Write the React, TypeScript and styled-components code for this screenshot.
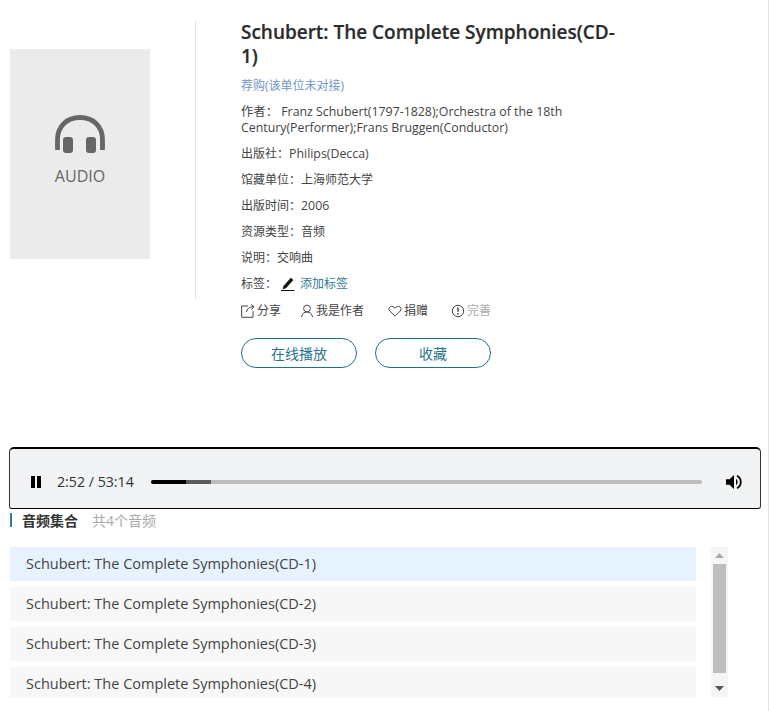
import React from "react";
import styled, { createGlobalStyle } from "styled-components";

const Global = createGlobalStyle`
  html, body { margin: 0; padding: 0; background: #fff; }
  body { font-family: "Open Sans", "Noto Sans CJK SC", sans-serif; color: #333; }
  * { box-sizing: border-box; }
`;

const Page = styled.div`
  width: 769px; height: 711px; overflow: hidden; position: relative;
  border-right: 1px solid #e4e4e4;
  padding-left: 10px;
  display: flex; flex-direction: column;
`;
const Top = styled.section`
  display: flex; height: 447px; padding-top: 20px;
`;
const CoverCol = styled.div`
  width: 186px; height: 280px; padding-top: 29px; border-right: 1px solid #e2e2e2;
`;
const Cover = styled.div`
  width: 140px; height: 210px; background: #ebebeb;
  display: flex; flex-direction: column; align-items: center; padding-top: 66px;
`;
const CoverLabel = styled.div`
  font-size: 16px; line-height: 20px; color: #666; margin-top: 13px;
`;
const Info = styled.div`
  width: 382px; margin-left: 45px; display: flex; flex-direction: column;
`;
const Title = styled.h1`
  margin: 0; font-size: 19px; line-height: 24px; font-weight: 600; color: #2b2b2b; width: 380px; letter-spacing: -0.02px; -webkit-text-stroke: 0.2px #2b2b2b;
`;
const Recommend = styled.a`
  margin-top: 9px; font-size: 12px; line-height: 18px; color: #6f97c9;
`;
const Meta = styled.div<{ $first?: boolean }>`
  font-size: ${p => (p.$first ? 12.35 : 12)}px; line-height: 16px; color: #444; margin-top: ${p => (p.$first ? 9 : 10)}px; width: 340px;
`;
const Latin = styled.span`
  font-size: 12.35px;
`;
const TagLink = styled.a`
  color: #2f7a96; margin-left: 4px;
`;
const TagRow = styled(Meta)`
  display: flex; align-items: center;
  svg { margin-left: 3px; }
`;
const Actions = styled.div`
  display: flex; margin-top: 11px; font-size: 12px; line-height: 16px; color: #444;
`;
const Action = styled.span<{ $w: number; $muted?: boolean }>`
  display: flex; align-items: center; gap: 2px; width: ${p => p.$w}px;
  color: ${p => (p.$muted ? "#aaa" : "#444")};
  svg { flex: none; }
`;
const Buttons = styled.div`
  display: flex; gap: 18px; margin-top: 19px;
`;
const Pill = styled.button`
  width: 116px; height: 30px; border: 1px solid #1f6f8b; border-radius: 15px; background: #fff;
  color: #2a7390; font: 14px "Open Sans", "Noto Sans CJK SC", sans-serif; padding: 0;
`;
const Player = styled.div`
  margin-left: -1px; width: 752px; height: 62px; flex: none;
  background: #f1f3f4; border: 1px solid #000; border-top-width: 2px; border-radius: 5px 5px 3px 3px;
  display: flex; align-items: center; padding: 6px 18px 0 21px;
  border-left-color: #333; border-right-color: #333;
`;
const Pause = styled.div`
  width: 10px; height: 12px; display: flex; justify-content: space-between; flex: none;
  &::before, &::after { content: ""; width: 4px; height: 12px; background: #000; }
`;
const Time = styled.span`
  margin-left: 16px; width: 94px; flex: none; font-size: 14.2px; color: #333;
`;
const Track = styled.div`
  flex: 1; height: 4px; border-radius: 2px; background: #bdbdbd; display: flex; overflow: hidden;
`;
const Played = styled.div`
  width: 35px; background: #000;
`;
const Buffered = styled.div`
  width: 25px; background: #5c5c5c;
`;
const Volume = styled.svg`
  margin-left: 24px; flex: none;
`;
const SectionHead = styled.div`
  display: flex; align-items: center; height: 14px; margin-top: 4px; flex: none;
  border-left: 2px solid #2f78a8; padding-left: 10px; font-size: 14px;
`;
const SectionTitle = styled.strong`
  font-weight: 700; color: #333;
`;
const SectionCount = styled.span`
  margin-left: 14px; color: #aaa;
`;
const ListArea = styled.div`
  display: flex; margin-top: 20px; height: 150px; flex: none;
`;
const List = styled.div`
  width: 686px; height: 150px; overflow: hidden; display: flex; flex-direction: column; gap: 6px;
`;
const Row = styled.div<{ $active?: boolean }>`
  height: 34px; flex: none; background: ${p => (p.$active ? "#e6f2fd" : "#f7f7f7")};
  padding-left: 16px; font-size: 14.5px; line-height: 34px; color: #444;
`;
const Scrollbar = styled.div`
  margin-left: 15px; width: 17px; height: 150px; background: #f5f5f5; display: flex; flex-direction: column; align-items: center;
`;
const ArrowBox = styled.div`
  height: 17px; flex: none; display: flex; align-items: center; justify-content: center;
`;
const Thumb = styled.div`
  width: 13px; height: 109px; background: #bebebe; flex: none;
`;
const ScrollGap = styled.div`
  flex: 1;
`;

function Headphones() {
  return (
    <svg width="50" height="38" viewBox="0 0 50 38" fill="none">
      <path d="M2.500 35V25C2.500 11 12 2.500 25 2.500S47.500 11 47.500 25v10" stroke="#666" strokeWidth="4.800" />
      <rect x="8" y="22" width="10" height="16" rx="3" fill="#666" />
      <rect x="31" y="22" width="10" height="16" rx="3" fill="#666" />
    </svg>
  );
}

const Pencil = () => (
  <svg width="16" height="16" viewBox="0 0 16 16">
    <path d="M3.500 10 10.800 1.800l2.600 2.200-7.500 8.200-3.200 1z" fill="#111" />
    <path d="M1 14.500h13.500" stroke="#111" strokeWidth="1" />
  </svg>
);
const ShareIcon = () => (
  <svg width="14" height="14" viewBox="0 0 14 14" fill="none" stroke="#444" strokeWidth="1">
    <path d="M7 2H.7v11.300H12V7" />
    <path d="M5.500 8C6 5 8 3 12 2.700M10 .5l3 2.200-2.500 2.800" />
  </svg>
);
const UserIcon = () => (
  <svg width="14" height="14" viewBox="0 0 14 14" fill="none" stroke="#444" strokeWidth="1">
    <circle cx="7" cy="4.500" r="3.400" />
    <path d="M1.500 13c.5-3.200 2.600-5 5.500-5s5 1.800 5.500 5" />
  </svg>
);
const HeartIcon = () => (
  <svg width="14" height="14" viewBox="0 0 14 14" fill="none" stroke="#444" strokeWidth="1">
    <path d="M7 12.200 1.800 7C.5 5.600.8 3.500 2.300 2.700c1.600-.8 3.400-.3 4.700 1.500 1.300-1.800 3.100-2.300 4.700-1.500 1.500.8 1.800 2.900.5 4.300z" />
  </svg>
);
const InfoIcon = () => (
  <svg width="14" height="14" viewBox="0 0 14 14" fill="none" stroke="#444" strokeWidth="1">
    <circle cx="7" cy="7" r="5.700" />
    <path d="M7 3.600v4.200" strokeWidth="1.500" />
    <path d="M7 9v1.400" strokeWidth="1.500" />
  </svg>
);

const tracks = ["CD-1", "CD-2", "CD-3", "CD-4"];

export default function App() {
  return (
    <Page>
      <Global />
      <Top>
        <CoverCol>
          <Cover>
            <Headphones />
            <CoverLabel>AUDIO</CoverLabel>
          </Cover>
        </CoverCol>
        <Info>
          <Title>Schubert: The Complete Symphonies(CD-1)</Title>
          <Recommend>荐购(该单位未对接)</Recommend>
          <Meta $first>作者：&nbsp;Franz Schubert(1797-1828);Orchestra of the 18th Century(Performer);Frans Bruggen(Conductor)</Meta>
          <Meta>出版社：<Latin>Philips(Decca)</Latin></Meta>
          <Meta>馆藏单位：上海师范大学</Meta>
          <Meta>出版时间：<Latin>2006</Latin></Meta>
          <Meta>资源类型：音频</Meta>
          <Meta>说明：交响曲</Meta>
          <TagRow>标签：<Pencil /><TagLink>添加标签</TagLink></TagRow>
          <Actions>
            <Action $w={59}><ShareIcon />分享</Action>
            <Action $w={88}><UserIcon />我是作者</Action>
            <Action $w={63}><HeartIcon />捐赠</Action>
            <Action $w={60} $muted><InfoIcon />完善</Action>
          </Actions>
          <Buttons>
            <Pill>在线播放</Pill>
            <Pill>收藏</Pill>
          </Buttons>
        </Info>
      </Top>
      <Player>
        <Pause />
        <Time>2:52 / 53:14</Time>
        <Track><Played /><Buffered /></Track>
        <Volume width="16" height="16" viewBox="0 0 16 16">
          <path d="M0 5.200h3.600L8 1v14l-4.400-4.200H0z" fill="#000" />
          <path d="M10 4.800a4 4 0 0 1 0 6.400z" fill="#000" />
          <path d="M11 1.800a7 7 0 0 1 0 12.400" fill="none" stroke="#000" strokeWidth="1.800" />
        </Volume>
      </Player>
      <SectionHead>
        <SectionTitle>音频集合</SectionTitle>
        <SectionCount>共4个音频</SectionCount>
      </SectionHead>
      <ListArea>
        <List>
          {tracks.map((t, i) => (
            <Row key={t} $active={i === 0}>Schubert: The Complete Symphonies({t})</Row>
          ))}
        </List>
        <Scrollbar>
          <ArrowBox>
            <svg width="9" height="5" viewBox="0 0 9 5"><path d="M4.500 0 9 5H0z" fill="#aaa" /></svg>
          </ArrowBox>
          <Thumb />
          <ScrollGap />
          <ArrowBox>
            <svg width="9" height="5" viewBox="0 0 9 5"><path d="M0 0h9L4.500 5z" fill="#555" /></svg>
          </ArrowBox>
        </Scrollbar>
      </ListArea>
    </Page>
  );
}
